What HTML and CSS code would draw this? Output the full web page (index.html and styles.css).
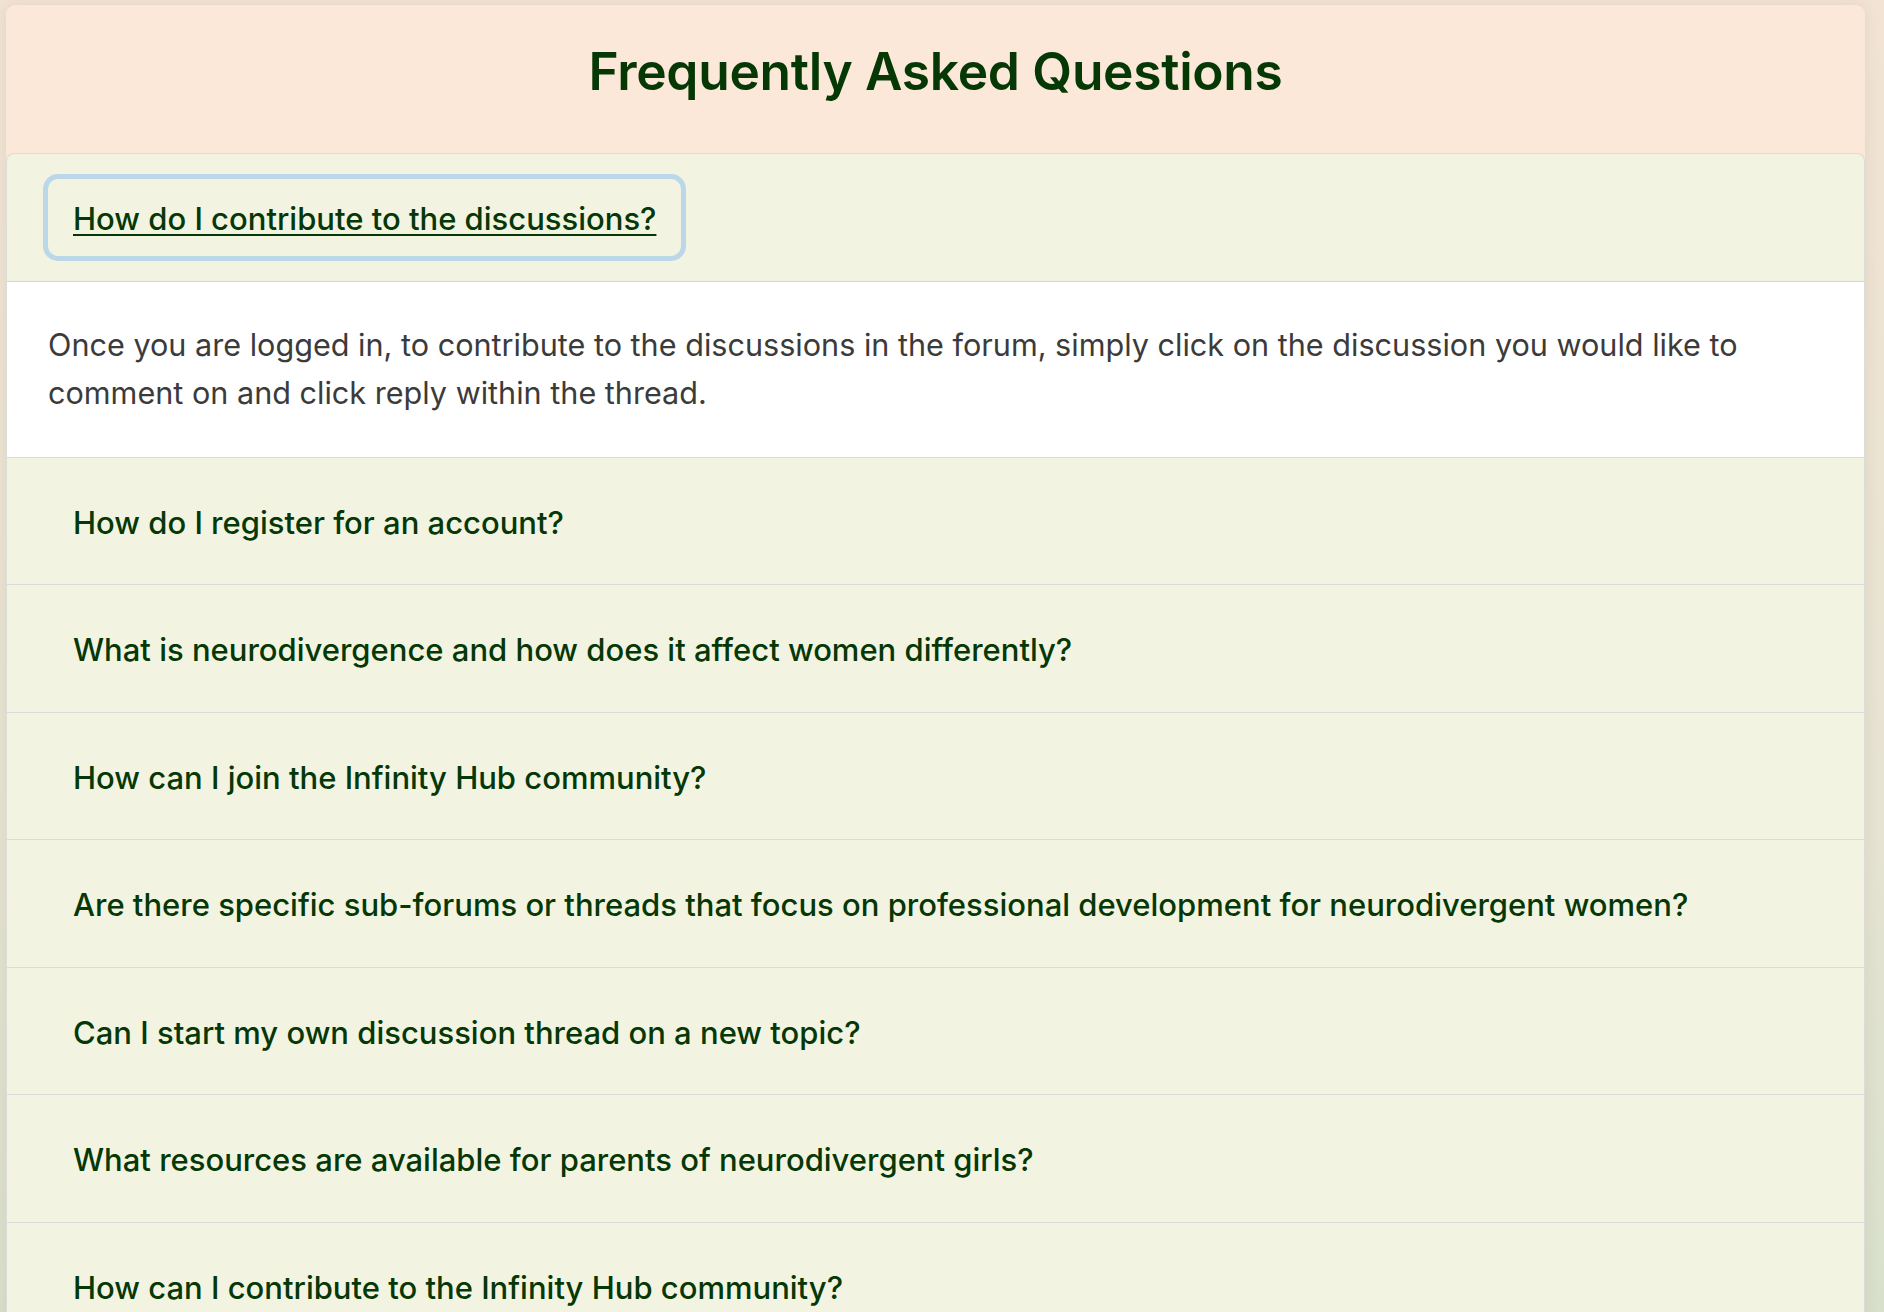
FILE: index.html
```html
<!DOCTYPE html>
<html lang="en">
<head>
<meta charset="utf-8">
<title>Frequently Asked Questions</title>
<link rel="stylesheet" href="styles.css">
</head>
<body>
<div class="page">
  <section class="card">
    <header class="card-head">
      <h1 class="title">Frequently Asked Questions</h1>
    </header>
    <div class="faq">
      <div class="item open">
        <div class="q-row"><button class="q-btn focused">How do I contribute to the discussions?</button></div>
        <div class="answer">Once you are logged in, to contribute to the discussions in the forum, simply click on the discussion you would like to comment on and click reply within the thread.</div>
      </div>
      <div class="item"><div class="q-row"><button class="q-btn">How do I register for an account?</button></div></div>
      <div class="item"><div class="q-row"><button class="q-btn">What is neurodivergence and how does it affect women differently?</button></div></div>
      <div class="item"><div class="q-row"><button class="q-btn">How can I join the Infinity Hub community?</button></div></div>
      <div class="item"><div class="q-row"><button class="q-btn">Are there specific sub-forums or threads that focus on professional development for neurodivergent women?</button></div></div>
      <div class="item"><div class="q-row"><button class="q-btn">Can I start my own discussion thread on a new topic?</button></div></div>
      <div class="item"><div class="q-row"><button class="q-btn">What resources are available for parents of neurodivergent girls?</button></div></div>
      <div class="item"><div class="q-row"><button class="q-btn">How can I contribute to the Infinity Hub community?</button></div></div>
      <div class="item"><div class="q-row"><button class="q-btn">How do I report inappropriate content?</button></div></div>
    </div>
  </section>
</div>
</body>
</html>
```

FILE: styles.css
```css
html, body {
  margin: 0;
  padding: 0;
}
body {
  min-height: 100vh;
  background: linear-gradient(to bottom, #f2e3d4 0%, #e6e3d2 55%, #d3dfca 100%);
  font-family: Inter, "Noto Sans", "Liberation Sans", sans-serif;
  overflow: hidden;
}
.page {
  padding: 5px 19px 0 6px;
}
.card {
  background: #fbe8d8;
  border-radius: 9px 9px 0 0;
  box-shadow: 0 0 14px rgba(120, 100, 70, 0.12);
}
.card-head {
  padding: 36px 0 52px;
  text-align: center;
}
.title {
  margin: 0;
  font-size: 51.5px;
  line-height: 60px;
  font-weight: 600;
  color: #063806;
  letter-spacing: -0.3px;
}
.faq {
  background: #f2f4e1;
  border: 1px solid #dcdcd8;
  border-bottom: none;
  border-radius: 8px 8px 0 0;
  overflow: hidden;
}
.item {
  border-bottom: 1px solid #dcdcdc;
}
.item.open .q-row {
  border-bottom: 1px solid #d6d8c9;
}
.q-row {
  padding: 25px 36px 25px 41px;
}
.q-btn {
  display: inline-block;
  border: none;
  background: transparent;
  padding: 21px 25px 17px;
  font-family: inherit;
  font-size: 31px;
  line-height: 38.5px;
  font-weight: 500;
  color: #063806;
  text-align: left;
  border-radius: 10px;
  cursor: pointer;
}
.q-btn.focused {
  text-decoration: underline;
  text-decoration-thickness: 2px;
  text-underline-offset: 4px;
  box-shadow: 0 0 0 5px #bcd7e8;
}
.answer {
  background: #ffffff;
  padding: 39px 64px 40px 41px;
  font-size: 30.6px;
  line-height: 48px;
  color: #3b3b3b;
}
```
